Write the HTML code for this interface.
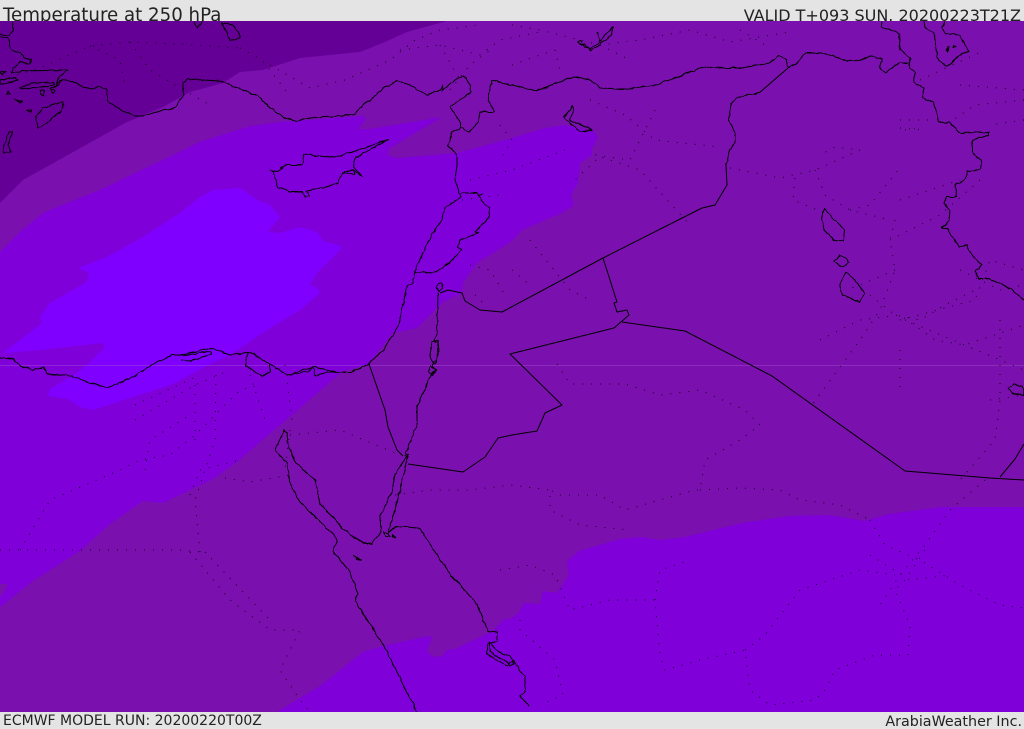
<!DOCTYPE html>
<html><head><meta charset="utf-8"><title>Temperature at 250 hPa</title>
<style>
html,body{margin:0;padding:0;background:#e4e4e4;}
#w{position:relative;width:1024px;height:729px;overflow:hidden;background:#e4e4e4;font-family:"DejaVu Sans","Liberation Sans",sans-serif;color:#222;}
.t{position:absolute;white-space:nowrap;line-height:1;}
svg{position:absolute;left:0;top:21px;}
</style></head><body><div id="w">
<div class="t" style="left:3px;top:7px;font-size:18.2px;">Temperature at 250 hPa</div>
<div class="t" style="right:3px;top:8px;font-size:16px;">VALID T+093 SUN. 20200223T21Z</div>
<div class="t" style="left:3px;top:714px;font-size:14px;">ECMWF MODEL RUN: 20200220T00Z</div>
<div class="t" style="right:2px;top:715px;font-size:14.3px;">ArabiaWeather Inc.</div>
<svg width="1024" height="691" viewBox="0 21 1024 691">
<defs><filter id="r" filterUnits="userSpaceOnUse" x="0" y="21" width="1024" height="691"><feTurbulence type="fractalNoise" baseFrequency="0.16" numOctaves="2" seed="4"/><feDisplacementMap in="SourceGraphic" scale="3" xChannelSelector="R" yChannelSelector="G"/></filter></defs>
<rect x="0" y="21" width="1024" height="691" fill="#7a10ae"/>
<path fill="#640096" d="M0,21H447L407,32L385,42L360,52L300,58L263,70L240,72L223,83L190,92L163,107L127,122L23,180L0,203Z"/>
<path fill="#7f00d9" d="M0,252L20,232L43,213L57,207L100,190L200,142L250,126L280,122L363,116L366,119L358,129L370,129L442,117L390,148L387,155L397,158L457,153L512,138L545,128L565,125L595,132L598,138L592,148L592,155L580,163L578,183L571,195L574,205L562,213L522,230L512,241L477,263L463,283L462,293L443,302L417,328L393,333L367,365L343,371L293,414L267,436L237,462L213,479L163,503L143,501L110,524L80,551L33,581L0,607Z"/>
<path fill="#7a10ae" d="M0,584L8,584L4,592L0,597Z"/>
<path fill="#7f00ff" d="M240,188L213,190L200,197L180,213L143,237L107,257L78,268L89,273L87,282L50,303L40,317L42,323L3,353L40,350L103,343L105,347L88,364L72,376L50,389L48,396L68,399L80,407L93,410L133,397L173,384L210,364L230,355L267,330L300,310L320,293L318,288L310,285L317,273L342,248L338,245L323,241L317,232L300,227L280,233L268,232L280,217L270,205L257,200Z"/>
<path fill="#7f00d9" d="M1024,507L942,507L889,514L864,521L829,515L789,516L742,523L685,537L660,540L642,537L620,539L579,551L567,561L569,575L557,593L543,591L540,604L524,603L519,612L512,618L503,620L493,631L455,649L447,650L442,656L433,657L427,651L432,637L428,636L383,646L363,652L320,686L277,712H1024Z"/>
<rect x="0" y="365" width="1024" height="1" fill="#a050d0" opacity=".45"/>
<g fill="none" stroke="#000" stroke-width="1" stroke-dasharray="1 8" opacity=".85">
<path d="M0,80L40,68L90,46L130,42L180,44L240,48M130,42L150,70L180,88L210,105M90,46L120,60L125,85M240,48L262,60L290,96M270,65L310,88L345,80L390,60L415,40L440,30L480,25"/>
<path d="M400,50L440,45L480,55L500,40L540,32M440,45L460,80M512,25L540,30L600,45L640,40L690,30L730,42L790,32M600,45L630,60M740,30L770,48M512,65L540,55L555,50M555,50L560,70M512,85L525,88M590,100L625,115L655,140L720,147M655,110L630,160L595,155L640,170L690,225M596,160L575,180M530,240L570,290L590,300M512,270L530,285"/>
<path d="M730,168L780,178L815,170L860,150L835,147L820,155M815,170L825,195L850,210L890,220M850,210L870,205L900,168M795,178L793,200L830,215M900,120L930,120M900,128L925,130M905,130L920,128M1024,100L975,105L950,122M920,80L985,50M960,85L1024,90M900,200L960,180M1024,120L990,125"/>
<path d="M895,220L890,240L895,270L880,310L860,340L812,405M890,240L940,215L980,180M895,270L860,285L845,290M900,320L975,300L990,260L1024,270M960,270L1000,290L1024,285M870,295L895,315L920,320L945,305L975,290M820,340L860,320L900,315L935,340L965,345L1024,325M1000,320L1000,400L995,440L960,480M900,350L900,390M905,320L1024,370M990,400L1024,395"/>
<path d="M557,364L570,384L625,384L660,395L700,390L745,410L760,425L740,440L705,460L700,490L695,490L660,500L625,510L600,495L560,495L550,490M395,495L430,490L470,490L510,485L550,490L550,510L580,525L630,530M700,490L740,488L780,490L800,500L840,505L870,520M985,480L950,510L925,545L900,575L880,605M870,520L885,545L920,560L960,585L1000,605L1024,608"/>
<path d="M500,570L530,565L555,575L570,610L610,600L655,600L660,655L665,670L700,660L745,650L750,690L770,705L815,700L825,690L835,670L875,655L908,655L910,625L895,590L905,580L925,550M655,600L660,570L690,560M745,650L765,635L800,590L860,570L895,575M520,620L520,630L555,660L563,695L540,705M870,555L910,580L950,575"/>
<path d="M0,550L180,550L200,552M20,550L50,500L120,470L140,460L170,455L195,435L240,390L260,385M145,470L150,440L190,415M190,495L200,470L240,460M200,552L195,500L205,470L215,440M190,552L230,600L270,630L300,630L290,650L280,670L300,700L310,712M205,552L270,620M135,420L195,385L230,370M195,385L195,440M135,405L200,375M216,375L215,440M250,375L265,420M285,365L292,420M290,435L340,430L400,455M225,478L250,482L290,475M290,430L285,470"/>
<path d="M450,90L470,65L490,50M500,125L512,140L500,160M470,180L512,170L565,150M462,200L500,195M470,265L490,270L505,295M475,295L485,305"/>
</g>
<g fill="none" stroke="#000" stroke-width="1" stroke-linejoin="round" filter="url(#r)">
<path d="M12,21L14,30L9,36L0,34M0,37L8,38L11,50L20,53L25,58L31,60L30,64L20,62L13,68L12,73L22,71L68,70L58,78L56,86L60,80L72,81L83,87L93,89L100,86L107,90L108,101L115,106L125,112L135,116L143,116L160,111L175,108L178,103L183,95L183,83L188,79L220,81L250,93L258,96L270,108L285,118L297,121L310,118L340,116L355,114L360,108L370,100L385,87L397,81L410,85L427,95L440,90L443,85L442,91L455,80L463,76L470,84L471,92L450,107L460,122L460,128L452,132L448,145L457,155L457,165L455,180L461,197L445,208L442,220L433,233L415,270L413,283L407,287L398,327L383,350L367,365L350,372L337,372L313,367L287,375L270,364L250,352"/>
<path d="M248,353L245,365L257,373L262,376L270,372L270,364M250,352L230,355L210,348L183,355L172,355L155,363L133,377L107,388L93,384L72,376L47,374L43,367L33,370L20,366L13,359L0,358M183,356L210,351L212,354L190,361L181,360M287,375L307,372L313,367L315,376L327,372L337,372"/>
<path d="M461,193H477L480,197L482,201L489,208L490,216L475,232L479,233L460,240L458,247L462,250L450,262L440,270L435,273L415,272M478,196L483,194"/>
<path d="M438,293L437,333L434,341L438,340L439,352L436,363L432,365L436,371L432,373L417,407L417,424L405,456M438,284L436,287L439,292L443,288L441,283ZM432,341L430,355L433,363L437,360L438,342ZM430,366L428,372L433,375L436,370Z"/>
<path d="M408,454L400,491L390,527L388,533L395,527L413,527L420,529L430,544L450,574L477,604L488,631L497,632L497,641L488,644L487,654L507,666L513,660L525,677L525,692L520,696L529,706"/>
<path d="M408,454L395,474L392,491L380,517L381,532L372,544L363,543L343,529L333,517L320,504L315,481L295,461L288,445L287,433L284,430L275,451L287,462L290,484L300,502L335,536L337,542L333,551L350,572L358,594L355,601L383,644L417,712"/>
<path d="M726,165L730,150L735,142L735,133L729,120L730,107L737,97L759,93M460,127L469,132L478,123L480,112L495,112L488,100L492,80L512,85L535,91L574,77L590,80L600,88L625,89L655,85L675,78L702,67L725,68L742,68L770,63L779,56L786,59L788,68L795,65L806,53L824,53L845,60L860,61L870,56L882,59L880,68L885,73L899,63L909,63"/>
<path d="M881,22L882,27L899,33L900,50L911,58L909,68L915,72L914,82L924,88L922,98L934,102L939,123L949,122L960,133L989,132L989,135L972,140L972,152L982,162L980,170L967,172L965,180L955,185L957,197L947,197L944,203L950,210L949,220L942,228L947,228L959,247L967,245L969,252L982,265L975,272L979,279L989,279L1009,288L1024,300"/>
<path d="M924,21L925,28L934,33L937,57L945,66L952,63L959,55L969,52L962,40L959,35L945,33L942,28L945,21M947,50L949,47L948,52ZM953,46L956,47L953,48Z"/>
<path d="M824,208L822,220L824,230L834,240L844,241L845,230L832,217ZM840,255L834,261L842,267L849,263L847,259ZM846,272L840,283L842,295L859,302L865,293L852,277Z"/>
<path d="M573,106L564,117L580,132L592,130L584,126L570,120L574,108Z"/>
<path d="M270,170L273,172L278,187L290,192L303,192L305,197L309,196L306,191L323,188L338,183L342,173L353,170L363,177L353,167L355,158L388,140L367,147L340,156L327,157L304,154L303,165L285,165L277,172ZM342,173L355,174L353,170"/>
<path d="M222,23L230,41L241,37L233,25ZM193,21L198,28L202,21M63,102L43,108L36,117L38,128L47,123L62,110ZM9,132L4,145L3,152L11,152L9,145L12,132ZM0,80L15,78L18,80L5,84L0,84ZM20,88L30,83L53,82L54,85L35,88L22,89ZM50,88L58,86L62,80M40,91L44,90L44,96L40,94ZM50,89L55,90L53,93ZM8,91L11,94L7,94ZM15,99L20,103L23,102L16,100ZM26,111L31,110L31,112ZM0,72L6,71L2,75Z"/>
<path d="M577,42L581,41L585,47L590,48L600,42L607,33L613,27L611,36L604,41L598,46L590,50L585,44L580,44ZM597,32L600,42M1008,388L1015,384L1022,387L1024,395L1012,393Z"/>
<path d="M354,556L358,558L361,560L357,559ZM384,532L388,534L390,537L385,536ZM392,535L396,537L392,537Z"/>
<path d="M490,642L490,652L497,657L505,660L510,666L514,664L510,656L500,653L495,648Z"/>
</g>
<g fill="none" stroke="#000" stroke-width="1" stroke-linejoin="round">
<path d="M369,364L385,410L388,427L397,450L403,456"/>
<path d="M440,293L448,290L462,293L465,301L480,310L502,312L603,258L702,208L715,205L727,185L726,165M759,93L788,68"/>
<path d="M408,464L463,472L485,457L498,438L512,435L537,431L545,413L562,405L510,354L614,328L629,315L627,310L617,312L614,303L617,302L603,258"/>
<path d="M622,322L685,331L772,376L905,471L990,478L1024,480M1000,477L1015,459L1024,444"/>
</g>
</svg>
</div></body></html>
